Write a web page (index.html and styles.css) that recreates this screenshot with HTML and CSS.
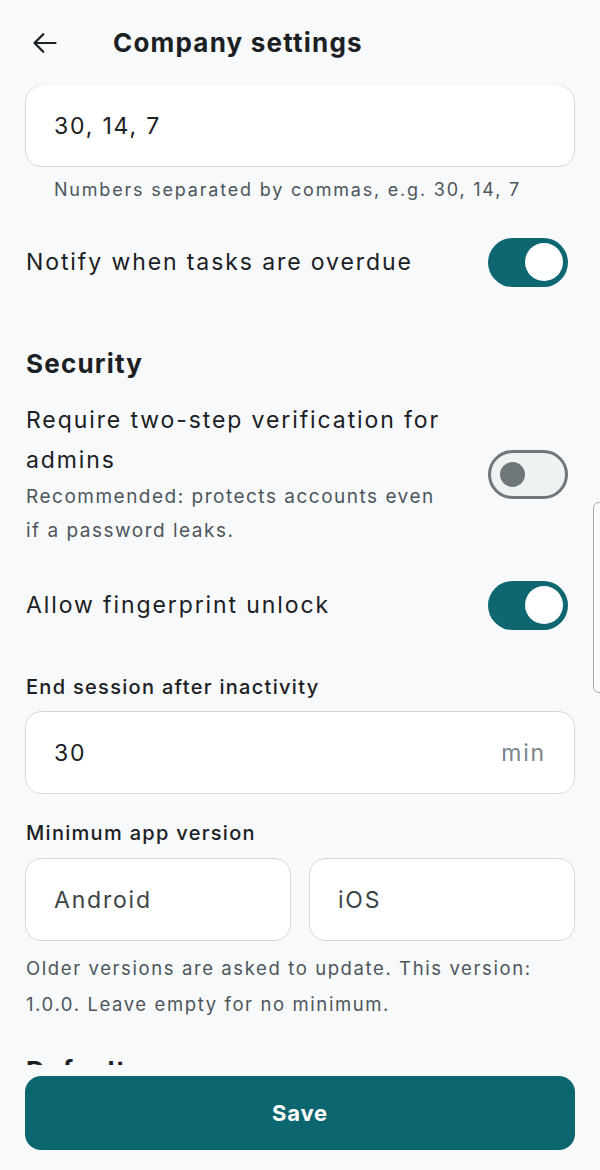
FILE: index.html
```html
<!DOCTYPE html>
<html lang="en">
<head>
  <meta charset="UTF-8" />
  <meta name="viewport" content="width=device-width, initial-scale=1.0" />
  <title>Company settings</title>
  <link rel="stylesheet" href="styles.css">
</head>
<body>

  <header class="top-bar">
    <button class="back-btn" aria-label="Back">
      <svg width="28" height="28" viewBox="0 0 24 24" fill="none" stroke="#1b2023" stroke-width="1.9" stroke-linecap="round" stroke-linejoin="round">
        <path d="M21 12H3.5" />
        <path d="M10.5 4.5L3 12l7.5 7.5" />
      </svg>
    </button>
    <h1 class="title">Company settings</h1>
  </header>

  <main class="content">
    <div class="input first-input">30, 14, 7</div>
    <p class="helper">Numbers separated by commas, e.g. 30, 14, 7</p>

    <div class="toggle-row notify-row">
      <span class="toggle-label">Notify when tasks are overdue</span>
      <span class="switch on"><span class="knob"></span></span>
    </div>

    <h2 class="section-title security-title">Security</h2>

    <div class="toggle-row twostep-row">
      <div class="toggle-text">
        <span class="toggle-label">Require two-step verification for admins</span>
        <span class="toggle-sub">Recommended: protects accounts even if a password leaks.</span>
      </div>
      <span class="switch off"><span class="knob"></span></span>
    </div>

    <div class="toggle-row fingerprint-row">
      <span class="toggle-label">Allow fingerprint unlock</span>
      <span class="switch on"><span class="knob"></span></span>
    </div>

    <label class="field-label session-label">End session after inactivity</label>
    <div class="input session-input">
      <span>30</span>
      <span class="suffix">min</span>
    </div>

    <label class="field-label version-label">Minimum app version</label>
    <div class="input-pair">
      <div class="input placeholder">Android</div>
      <div class="input placeholder">iOS</div>
    </div>
    <p class="helper version-helper">Older versions are asked to update. This version: 1.0.0. Leave empty for no minimum.</p>

    <h2 class="section-title defaults-title">Defaults</h2>
  </main>

  <div class="scroll-thumb"></div>

  <footer class="bottom-bar">
    <button class="save-btn">Save</button>
  </footer>

</body>
</html>
```

FILE: styles.css
```css
* {
  box-sizing: border-box;
}

body {
  margin: 0;
  width: 600px;
  height: 1170px;
  overflow: hidden;
  position: relative;
  font-family: 'Inter', 'Noto Sans', sans-serif;
  background: #f7f9fb;
  color: #1b2023;
}

/* Шапка */
.top-bar {
  height: 86px;
  display: flex;
  align-items: center;
  padding: 0 0 0 31px;
  background: #f7f9fb;
  position: relative;
  z-index: 2;
}

.back-btn {
  border: none;
  background: none;
  padding: 0;
  width: 28px;
  height: 30px;
  display: flex;
  align-items: center;
  justify-content: center;
}

.title {
  margin: 0 0 0 54px;
  font-size: 26px;
  font-weight: 700;
  line-height: 34px;
  letter-spacing: 1.2px;
}

/* Контент */
.content {
  height: 979px;
  overflow: hidden;
  padding: 0 25px;
}

.input {
  height: 82px;
  background: #fff;
  border: 1px solid #d3dadd;
  border-radius: 16px;
  padding: 0 28px;
  display: flex;
  align-items: center;
  font-size: 23px;
  letter-spacing: 1.8px;
  color: #1b2023;
}

.first-input {
  margin-top: -1px;
}

.helper {
  margin: 11px 0 0 29px;
  font-size: 18px;
  line-height: 24px;
  letter-spacing: 1.8px;
  color: #4d565a;
}

.toggle-row {
  display: flex;
  align-items: center;
  justify-content: space-between;
  padding-left: 1px;
  gap: 20px;
}

.toggle-label {
  font-size: 23px;
  line-height: 40px;
  letter-spacing: 1.9px;
}

.toggle-text {
  display: flex;
  flex-direction: column;
  max-width: 425px;
}

.toggle-sub {
  font-size: 19px;
  line-height: 34px;
  letter-spacing: 1.5px;
  color: #4d565a;
}

.notify-row {
  margin-top: 35px;
  height: 50px;
}

.twostep-row {
  margin-top: 19px;
}

.fingerprint-row {
  margin-top: 32px;
  height: 50px;
}

.section-title {
  margin: 0 0 0 1px;
  font-size: 26px;
  font-weight: 700;
  line-height: 34px;
  letter-spacing: 1.2px;
}

.security-title {
  margin-top: 60px;
}

.defaults-title {
  margin-top: 32px;
}

/* Переключатели */
.switch {
  flex: none;
  width: 80px;
  height: 49px;
  border-radius: 25px;
  margin-right: 7px;
  display: flex;
  align-items: center;
}

.switch.on {
  background: #0e6670;
  justify-content: flex-end;
  padding-right: 5px;
}

.switch.on .knob {
  width: 38px;
  height: 38px;
  border-radius: 50%;
  background: #fff;
}

.switch.off {
  background: #eef2f3;
  border: 3px solid #6f7679;
  padding-left: 9px;
}

.switch.off .knob {
  width: 25px;
  height: 25px;
  border-radius: 50%;
  background: #6f7679;
}

.field-label {
  display: block;
  margin-left: 1px;
  font-size: 20px;
  font-weight: 500;
  line-height: 28px;
  letter-spacing: 1.3px;
}

.session-label {
  margin-top: 43px;
}

.session-input {
  margin-top: 10px;
  height: 83px;
  justify-content: space-between;
}

.suffix {
  color: #7b8488;
}

.version-label {
  margin-top: 25px;
}

.input-pair {
  margin-top: 11px;
  display: grid;
  grid-template-columns: 1fr 1fr;
  gap: 18px;
}

.input-pair .input {
  height: 83px;
}

.placeholder {
  color: #3d4447;
}

.version-helper {
  margin: 9px 0 0 1px;
  font-size: 18.5px;
  line-height: 36px;
  letter-spacing: 1.6px;
}

/* Полоса прокрутки справа */
.scroll-thumb {
  position: absolute;
  left: 593px;
  top: 502px;
  width: 14px;
  height: 191px;
  border: 1px solid #a3a9ac;
  border-radius: 6px;
  background: #f9fbfc;
}

/* Нижняя панель с кнопкой */
.bottom-bar {
  position: absolute;
  left: 0;
  right: 0;
  bottom: 0;
  height: 105px;
  background: #f7f9fb;
  padding: 11px 25px 0;
  z-index: 2;
}

.save-btn {
  width: 100%;
  height: 74px;
  border: none;
  border-radius: 16px;
  background: #0c6670;
  color: #fff;
  font-family: 'Inter', 'Noto Sans', sans-serif;
  font-size: 22px;
  font-weight: 700;
  letter-spacing: 0.8px;
}
```
